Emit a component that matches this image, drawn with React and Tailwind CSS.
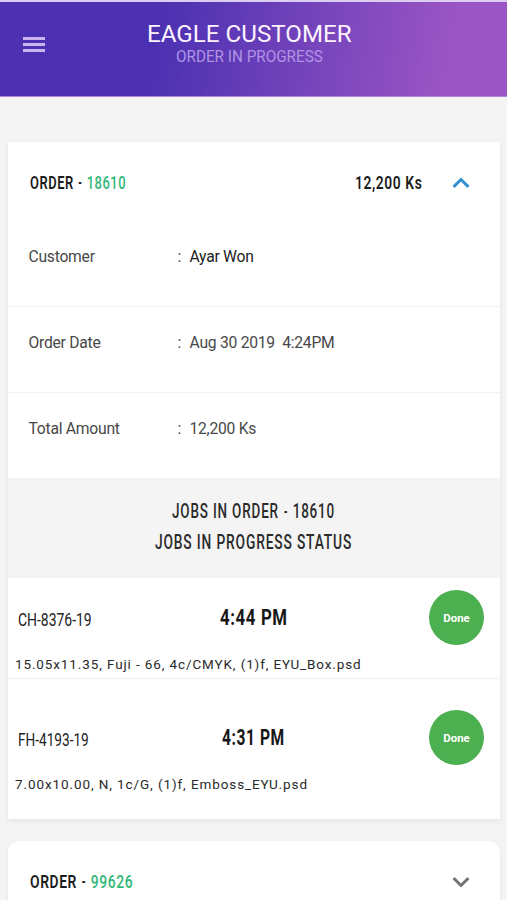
import { useLayoutEffect, useRef, useState } from "react";

// Renders text squeezed horizontally so that it fills its box, as a condensed face would.
function Condensed({ children, className = "" }) {
  const inner = useRef(null);
  const [scale, setScale] = useState(1);
  useLayoutEffect(() => {
    const el = inner.current;
    setScale(el.parentElement.offsetWidth / el.offsetWidth);
  }, []);
  return (
    <div className={"h-6 leading-6 whitespace-pre " + className}>
      <span ref={inner} className="inline-block origin-left" style={{ transform: `scaleX(${scale})` }}>
        {children}
      </span>
    </div>
  );
}

function Dash() {
  return <span className="inline-block scale-x-75">-</span>;
}

function Chevron({ up }) {
  return (
    <svg width="20" height="14" viewBox="0 0 20 14" fill="none" strokeWidth="2.9" className={up ? "stroke-[#338fd0]" : "stroke-[#757575]"}>
      <path d={up ? "M2.6 10.9 10 3.5l7.4 7.4" : "M2.6 3.1 10 10.5l7.4-7.4"} />
    </svg>
  );
}

function DetailRow({ label, value, dark, last }) {
  return (
    <div className={"flex pl-[20.5px] pt-[24px] text-[15.7px] leading-6 tracking-[-0.26px] text-[#484848] " + (last ? "h-[85px]" : "h-[86px] border-b border-[#f1f1f1]")}>
      <div className="w-[149px]">{label}</div>
      <div className="w-[12px]">:</div>
      <div className={"whitespace-pre " + (dark ? "text-[#222]" : "")}>{value}</div>
    </div>
  );
}

function Job({ code, codeWidth, time, timeWidth, file, fileWidth, first }) {
  return (
    <div className={first ? "h-[101px] border-b border-[#f1f1f1]" : "h-[140px] pt-[19px]"}>
      <div className="flex h-[76px] items-start justify-between pr-[16px] pl-[9.5px]">
        <div className="w-[150px] pt-[30px]">
          <Condensed className={"text-[19px] text-[#222] " + codeWidth}>{code}</Condensed>
        </div>
        <div className="flex w-[172px] justify-center pt-[28px]">
          <Condensed className={"text-[22px] font-bold tracking-[0.8px] text-[#161616] " + timeWidth}>{time}</Condensed>
        </div>
        <div className="flex w-[144px] justify-end pt-[12px]">
          <div className="flex size-[55px] items-center justify-center rounded-full bg-[#4caf50] pt-[3px] text-[11.5px] font-bold text-white">
            Done
          </div>
        </div>
      </div>
      <Condensed className={"ml-[7px] -mt-[2px] text-[13.5px] tracking-[0.9px] text-[#292929] " + fileWidth}>{file}</Condensed>
    </div>
  );
}

function OrderHeading({ number, widthClass, total, open }) {
  return (
    <div className={"flex items-center pl-[22px] pr-[29.5px] " + (open ? "h-[82px]" : "h-[80px]")}>
      <Condensed className={"text-[19px] font-semibold tracking-[0.8px] text-[#1c1c1c] " + widthClass}>
        ORDER <Dash /> <span className="font-medium text-[#32b878]">{number}</span>
      </Condensed>
      <div className="flex-1" />
      {total && <Condensed className="mr-[29px] w-[67px] text-[19px] font-semibold tracking-[0.8px] text-[#1c1c1c]">{total}</Condensed>}
      <Chevron up={open} />
    </div>
  );
}

export default function App() {
  return (
    <div className="h-[900px] w-[507px] overflow-hidden bg-[#f4f4f4] font-['Roboto',sans-serif]">
      <header className="flex h-[97px] border-t-2 border-b border-t-[#dccdf5] border-b-[#a886d2] bg-linear-[100deg,#4b31b1_0%,#4b31b1_31%,#9b55c4_88%,#9b55c4_100%] bg-origin-border">
        <div className="flex w-[80px] flex-col gap-[3.5px] pt-[35px] pl-[23px]">
          <i className="h-[2.5px] w-[22px] bg-[#c9b4f0]" />
          <i className="h-[2.5px] w-[22px] bg-[#c9b4f0]" />
          <i className="h-[2.5px] w-[22px] bg-[#c9b4f0]" />
        </div>
        <div className="flex flex-1 flex-col items-center pt-[20px] pr-[88px]">
          <Condensed className="w-[205px] text-[24.5px] text-[#fdf3ff]">EAGLE CUSTOMER</Condensed>
          <Condensed className="-mt-[1px] w-[147px] text-[16px] text-[#b193e6]">ORDER IN PROGRESS</Condensed>
        </div>
      </header>

      <main className="flex flex-col gap-[22px] pt-[45px] pr-[7px] pl-[8px]">
        <section className="h-[677px] bg-white shadow-[0_2px_5px_rgba(0,0,0,0.07)]">
          <OrderHeading number="18610" widthClass="w-[96px]" total="12,200 Ks" open />
          <div className="-mt-[3px]">
            <DetailRow label="Customer" value="Ayar Won" dark />
            <DetailRow label="Order Date" value="Aug 30 2019  4:24PM" />
            <DetailRow label="Total Amount" value="12,200 Ks" last />
          </div>
          <div className="flex h-[100px] flex-col items-center gap-[7px] bg-[#f4f4f4] pt-[22px] pr-[1px]">
            <Condensed className="w-[163px] text-[19.5px] font-medium tracking-[1.2px] text-[#2b2b2b]">JOBS IN ORDER <Dash /> 18610</Condensed>
            <Condensed className="w-[197px] text-[19.5px] font-medium tracking-[1.2px] text-[#2b2b2b]">JOBS IN PROGRESS STATUS</Condensed>
          </div>
          <Job first code="CH-8376-19" codeWidth="w-[74px]" time="4:44 PM" timeWidth="w-[68px]" file="15.05x11.35, Fuji - 66, 4c/CMYK, (1)f, EYU_Box.psd" fileWidth="w-[347px]" />
          <Job code="FH-4193-19" codeWidth="w-[71px]" time="4:31 PM" timeWidth="w-[63px]" file="7.00x10.00, N, 1c/G, (1)f, Emboss_EYU.psd" fileWidth="w-[293px]" />
        </section>
        <section className="h-[80px] rounded-t-[11px] bg-white pt-px shadow-[0_1px_4px_rgba(0,0,0,0.06)]">
          <OrderHeading number="99626" widthClass="w-[103px]" />
        </section>
      </main>
    </div>
  );
}
